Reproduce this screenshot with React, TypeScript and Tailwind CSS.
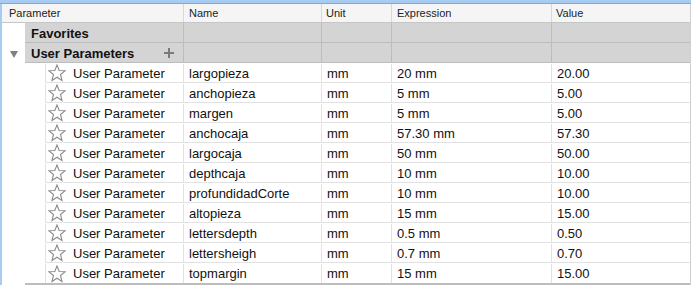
const ROWS = [
  { name: 'largopieza', expr: '20 mm', value: '20.00' },
  { name: 'anchopieza', expr: '5 mm', value: '5.00' },
  { name: 'margen', expr: '5 mm', value: '5.00' },
  { name: 'anchocaja', expr: '57.30 mm', value: '57.30' },
  { name: 'largocaja', expr: '50 mm', value: '50.00' },
  { name: 'depthcaja', expr: '10 mm', value: '10.00' },
  { name: 'profundidadCorte', expr: '10 mm', value: '10.00' },
  { name: 'altopieza', expr: '15 mm', value: '15.00' },
  { name: 'lettersdepth', expr: '0.5 mm', value: '0.50' },
  { name: 'lettersheigh', expr: '0.7 mm', value: '0.70' },
  { name: 'topmargin', expr: '15 mm', value: '15.00' },
];

function Star() {
  return (
    <svg width="18" height="18" viewBox="0 0 18 18" className="shrink-0">
      <polygon
        points="9,1 11.2,6.5 17,6.8 12.5,10.5 14,16.5 9,13.2 4,16.5 5.5,10.5 1,6.8 6.8,6.5"
        fill="none"
        stroke="#8c8c8c"
        strokeWidth="1.1"
        strokeLinejoin="miter"
      />
    </svg>
  );
}

function GroupRow({ label, expanded, plus }: { label: string; expanded?: boolean; plus?: boolean }) {
  return (
    <div className="flex h-[20px] border-b border-[#bdbdbd]">
      <div className="w-[23px] shrink-0 bg-white flex items-center pl-[8px] pt-[2px] -mb-px">
        {expanded && (
          <svg width="8" height="7" viewBox="0 0 8 7">
            <polygon points="0,0 8,0 4,7" fill="#808080" />
          </svg>
        )}
      </div>
      <div className="flex flex-1 bg-[#d4d4d4]">
        <div className="w-[159px] flex items-center justify-between pl-[6px] pr-[9px] pt-px border-r border-[#bdbdbd] font-bold">
          <span>{label}</span>
          {plus && (
            <svg width="10" height="10" viewBox="0 0 10 10">
              <rect x="4" y="0" width="2" height="10" fill="#7a7a7a" />
              <rect x="0" y="4" width="10" height="2" fill="#7a7a7a" />
            </svg>
          )}
        </div>
        <div className="w-[138px] border-r border-[#bdbdbd]" />
        <div className="w-[70px] border-r border-[#bdbdbd]" />
        <div className="w-[160px] border-r border-[#bdbdbd]" />
        <div className="flex-1" />
      </div>
    </div>
  );
}

function DataRow({ name, expr, value, last }: { name: string; expr: string; value: string; last?: boolean }) {
  return (
    <div className="flex h-[20px]">
      <div className="w-[43px] shrink-0 bg-white" />
      <div className={`flex flex-1 pt-px ${last ? '' : 'border-b border-[#e2e2e2]'}`}>
        <div className="w-[139px] flex items-center gap-[7px] pl-[2px] border-x border-[#e2e2e2]">
          <Star />
          <span>User Parameter</span>
        </div>
        <div className="w-[138px] flex items-center pl-[5px] border-r border-[#e2e2e2]">{name}</div>
        <div className="w-[70px] flex items-center pl-[5px] border-r border-[#e2e2e2]">mm</div>
        <div className="w-[160px] flex items-center pl-[5px] border-r border-[#e2e2e2]">{expr}</div>
        <div className="flex-1 flex items-center pl-[5px]">{value}</div>
      </div>
    </div>
  );
}

export default function App() {
  return (
    <div
      className="w-[691px] h-[285px] overflow-hidden bg-white text-[13px] text-[#111] leading-none"
      style={{ fontFamily: '"Liberation Sans", Arial, sans-serif' }}
    >
      <div className="h-[3px] bg-[#a8cbf1]" />
      <div className="h-px bg-[#7ea9dc]" />
      <div className="flex h-full">
        <div className="w-[2px] shrink-0 bg-[#a8cbf1]" />
        <div className="flex-1 flex flex-col border-r border-[#cfcfcf]">
          {/* column header */}
          <div className="flex h-[19px] shrink-0 bg-[#f5f5f5] border-b border-[#c6c6c6] text-[11px] text-[#222]">
            <div className="w-[182px] flex items-center pl-[7px] border-r border-[#d8d8d8]">Parameter</div>
            <div className="w-[138px] flex items-center pl-[5px] border-r border-[#d8d8d8]">Name</div>
            <div className="w-[70px] flex items-center pl-[4px] border-r border-[#d8d8d8]">Unit</div>
            <div className="w-[160px] flex items-center pl-[5px] border-r border-[#d8d8d8]">Expression</div>
            <div className="flex-1 flex items-center pl-[4px]">Value</div>
          </div>

          <GroupRow label="Favorites" />
          <GroupRow label="User Parameters" expanded plus />

          {ROWS.map((r, i) => (
            <DataRow key={r.name} {...r} last={i === ROWS.length - 1} />
          ))}
          <div className="flex">
            <div className="w-[23px] shrink-0" />
            <div className="flex-1 h-[2px] bg-[#bdbdbd]" />
          </div>
        </div>
      </div>
    </div>
  );
}
